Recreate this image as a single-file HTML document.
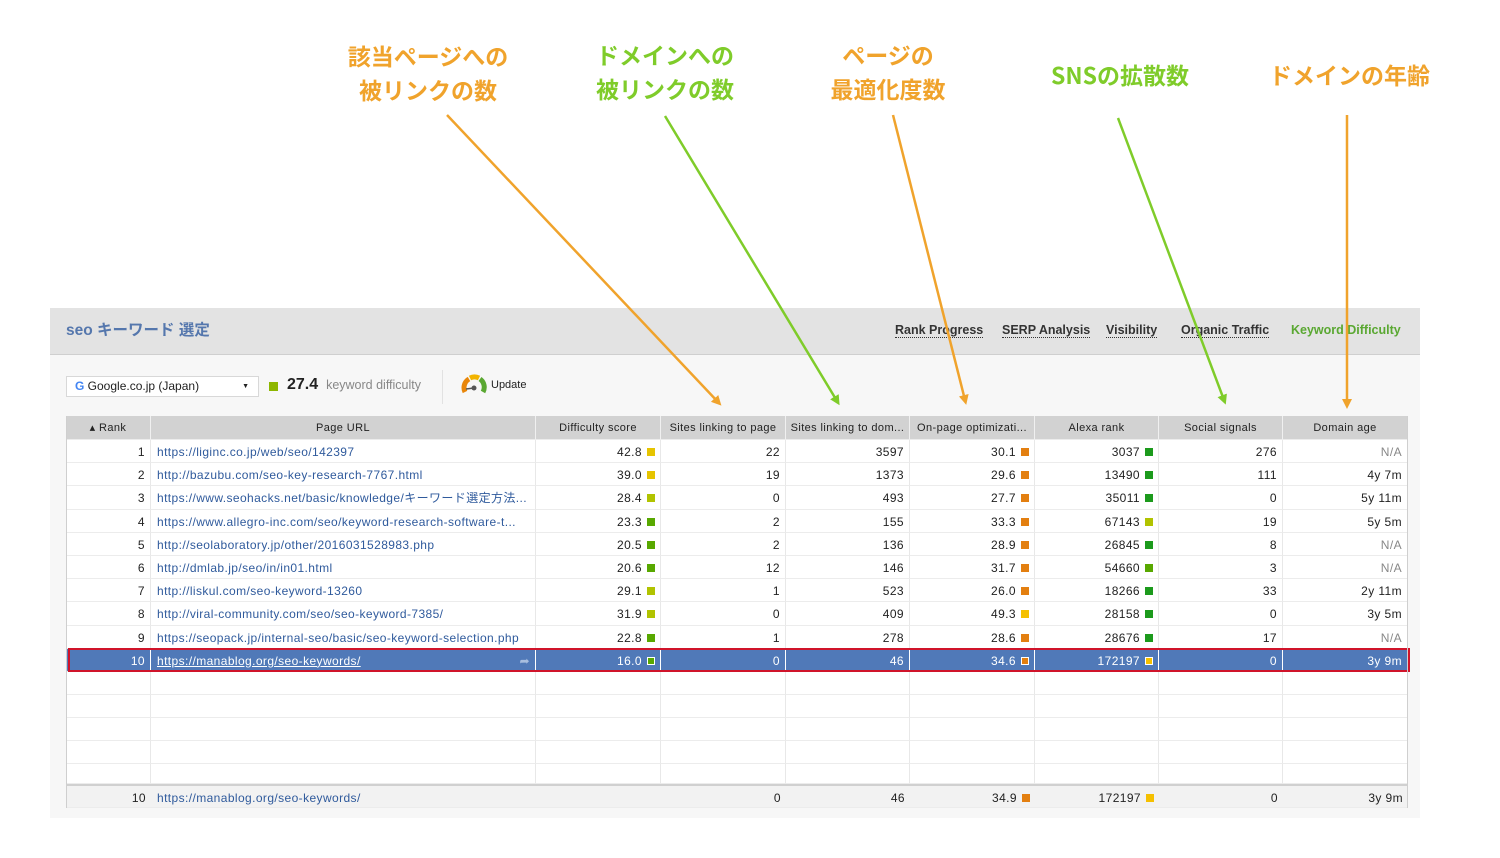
<!DOCTYPE html>
<html><head><meta charset="utf-8"><style>
*{margin:0;padding:0;box-sizing:border-box}
body{width:1500px;height:858px;background:#fff;position:relative;overflow:hidden;font-family:"Liberation Sans","Noto Sans CJK JP",sans-serif}
.lbl{position:absolute;font-weight:bold;font-size:23px;text-align:center;line-height:34px;font-family:"Noto Sans CJK JP","Liberation Sans",sans-serif;white-space:nowrap}
.o{color:#f0a32c}.g{color:#7fcc2a}
#panel{position:absolute;left:50px;top:308px;width:1370px;height:510px;background:#f7f7f7}
#hdr{position:absolute;left:0;top:0;width:1370px;height:47px;background:#e3e3e3;border-bottom:1px solid #cfcfcf}
#title{position:absolute;left:16px;top:10px;font-size:15.5px;color:#5577ad;font-weight:bold;font-family:"Liberation Sans","Noto Sans CJK JP",sans-serif}
.tab{position:absolute;top:15px;font-size:12.5px;font-weight:bold;color:#333;border-bottom:1px dotted #333;line-height:14px}
.row{position:absolute;left:66px;width:1342px;display:grid;grid-template-columns:85px 385px 125px 125px 124px 125px 124px 124px 125px;font-size:12px;color:#222;background:#fff}
.row div{border-right:1px solid #e8e8e8;border-bottom:1px solid #ececec;text-align:right;padding-right:5px;padding-top:1px;white-space:nowrap;overflow:hidden;line-height:22px;letter-spacing:.4px}
.row div.u{text-align:left;padding-left:6px;color:#2f5a9c}
.sq{display:inline-block;width:8px;height:8px;margin-left:5px;vertical-align:0px}
.y{background:#e6c400}.yg{background:#b1c300}.gr{background:#58a800}.dg{background:#1c9a1c}.or{background:#e37f10}.ye{background:#f5c000}
.head div{background:#d2d2d2;text-align:center;padding:0;padding-top:1px;border-right:1px solid #f0f0f0;color:#222;font-size:11px}
.sel{background:#5079b8}
.sel div{color:#fff;border-right:1px solid #fff}
.sel div.u{color:#fff;text-decoration:underline}
.na{color:#888}
</style></head><body>

<div class="lbl o" style="left:338px;top:38px;width:180px">該当ページへの<br>被リンクの数</div>
<div class="lbl g" style="left:580px;top:37px;width:170px">ドメインへの<br>被リンクの数</div>
<div class="lbl o" style="left:818px;top:37px;width:140px">ページの<br>最適化度数</div>
<div class="lbl g" style="left:1040px;top:57px;width:160px">SNSの拡散数</div>
<div class="lbl o" style="left:1262px;top:57px;width:175px">ドメインの年齢</div>

<div id="panel">
 <div id="hdr">
  <div id="title">seo キーワード 選定</div>
  <div class="tab" style="left:845px">Rank Progress</div>
  <div class="tab" style="left:952px">SERP Analysis</div>
  <div class="tab" style="left:1056px">Visibility</div>
  <div class="tab" style="left:1131px">Organic Traffic</div>
  <div class="tab" style="left:1241px;color:#5aa832;border:none">Keyword Difficulty</div>
 </div>
 <div style="position:absolute;left:16px;top:68px;width:193px;height:21px;background:#fff;border:1px solid #d8d8d8;font-size:12px;line-height:19px;padding-left:8px;color:#222"><b style="color:#4285f4">G</b> Google.co.jp (Japan)<span style="position:absolute;right:9px;font-size:7px">▼</span></div>
 <div style="position:absolute;left:219px;top:74px;width:9px;height:9px;background:#8db600"></div>
 <div style="position:absolute;left:237px;top:68px;font-size:16px;font-weight:bold;color:#222">27.4 <span style="font-size:12.5px;font-weight:normal;color:#888">&nbsp;keyword difficulty</span></div>
 <div style="position:absolute;left:392px;top:62px;width:1px;height:34px;background:#e2e2e2"></div>
 <svg style="position:absolute;left:411px;top:66px" width="26" height="24" viewBox="0 0 26 24"><path d="M4 18 A10 10 0 0 1 8 5" stroke="#e8860a" stroke-width="5" fill="none"/><path d="M9 4 A10 10 0 0 1 18 4" stroke="#f2b400" stroke-width="5" fill="none"/><path d="M19 5 A10 10 0 0 1 22 18" stroke="#5aa832" stroke-width="5" fill="none"/><circle cx="13" cy="14" r="2.5" fill="#555"/><path d="M5 15 L13 14" stroke="#555" stroke-width="1.5"/></svg>
 <div style="position:absolute;left:441px;top:71px;font-size:11px;color:#222">Update</div>
</div>

<div class="row head" style="top:416px;height:24px"><div>▴ Rank</div><div>Page URL</div><div>Difficulty score</div><div>Sites linking to page</div><div>Sites linking to dom...</div><div>On-page optimizati...</div><div>Alexa rank</div><div>Social signals</div><div>Domain age</div></div>

<div class="row" style="top:440px;height:23.2px"><div>1</div><div class="u">https://liginc.co.jp/web/seo/142397</div><div>42.8<i class="sq y"></i></div><div>22</div><div>3597</div><div>30.1<i class="sq or"></i></div><div>3037<i class="sq dg"></i></div><div>276</div><div class="na">N/A</div></div>
<div class="row" style="top:463.2px;height:23.2px"><div>2</div><div class="u">http://bazubu.com/seo-key-research-7767.html</div><div>39.0<i class="sq y"></i></div><div>19</div><div>1373</div><div>29.6<i class="sq or"></i></div><div>13490<i class="sq dg"></i></div><div>111</div><div>4y 7m</div></div>
<div class="row" style="top:486.4px;height:23.2px"><div>3</div><div class="u">https://www.seohacks.net/basic/knowledge/キーワード選定方法...</div><div>28.4<i class="sq yg"></i></div><div>0</div><div>493</div><div>27.7<i class="sq or"></i></div><div>35011<i class="sq dg"></i></div><div>0</div><div>5y 11m</div></div>
<div class="row" style="top:509.6px;height:23.2px"><div>4</div><div class="u">https://www.allegro-inc.com/seo/keyword-research-software-t...</div><div>23.3<i class="sq gr"></i></div><div>2</div><div>155</div><div>33.3<i class="sq or"></i></div><div>67143<i class="sq yg"></i></div><div>19</div><div>5y 5m</div></div>
<div class="row" style="top:532.8px;height:23.2px"><div>5</div><div class="u">http://seolaboratory.jp/other/2016031528983.php</div><div>20.5<i class="sq gr"></i></div><div>2</div><div>136</div><div>28.9<i class="sq or"></i></div><div>26845<i class="sq dg"></i></div><div>8</div><div class="na">N/A</div></div>
<div class="row" style="top:556px;height:23.2px"><div>6</div><div class="u">http://dmlab.jp/seo/in/in01.html</div><div>20.6<i class="sq gr"></i></div><div>12</div><div>146</div><div>31.7<i class="sq or"></i></div><div>54660<i class="sq gr"></i></div><div>3</div><div class="na">N/A</div></div>
<div class="row" style="top:579.2px;height:23.2px"><div>7</div><div class="u">http://liskul.com/seo-keyword-13260</div><div>29.1<i class="sq yg"></i></div><div>1</div><div>523</div><div>26.0<i class="sq or"></i></div><div>18266<i class="sq dg"></i></div><div>33</div><div>2y 11m</div></div>
<div class="row" style="top:602.4px;height:23.2px"><div>8</div><div class="u">http://viral-community.com/seo/seo-keyword-7385/</div><div>31.9<i class="sq yg"></i></div><div>0</div><div>409</div><div>49.3<i class="sq ye"></i></div><div>28158<i class="sq dg"></i></div><div>0</div><div>3y 5m</div></div>
<div class="row" style="top:625.6px;height:23.2px"><div>9</div><div class="u">https://seopack.jp/internal-seo/basic/seo-keyword-selection.php</div><div>22.8<i class="sq gr"></i></div><div>1</div><div>278</div><div>28.6<i class="sq or"></i></div><div>28676<i class="sq dg"></i></div><div>17</div><div class="na">N/A</div></div>
<div class="row sel" style="top:648.8px;height:23.2px"><div>10</div><div class="u">https://manablog.org/seo-keywords/<span style="float:right;text-decoration:none;color:#a8bedf">➦</span></div><div>16.0<i class="sq gr" style="border:1px solid #fff"></i></div><div>0</div><div>46</div><div>34.6<i class="sq or" style="border:1px solid #fff"></i></div><div>172197<i class="sq ye" style="border:1px solid #fff"></i></div><div>0</div><div>3y 9m</div></div>
<div style="position:absolute;left:68px;top:648px;width:1342px;height:24px;border:2px solid #d0142a"></div>

<div class="row" style="top:672px;height:23px"><div></div><div></div><div></div><div></div><div></div><div></div><div></div><div></div><div></div></div>
<div class="row" style="top:695px;height:23px"><div></div><div></div><div></div><div></div><div></div><div></div><div></div><div></div><div></div></div>
<div class="row" style="top:718px;height:23px"><div></div><div></div><div></div><div></div><div></div><div></div><div></div><div></div><div></div></div>
<div class="row" style="top:741px;height:23px"><div></div><div></div><div></div><div></div><div></div><div></div><div></div><div></div><div></div></div>
<div class="row" style="top:764px;height:20px"><div></div><div></div><div></div><div></div><div></div><div></div><div></div><div></div><div></div></div>
<div class="row" style="top:784px;height:24px;background:#f2f2f2;border-top:2px solid #d0d0d0"><div style="border-right:none">10</div><div class="u" style="border-right:none">https://manablog.org/seo-keywords/</div><div style="border-right:none"></div><div style="border-right:none">0</div><div style="border-right:none">46</div><div style="border-right:none">34.9<i class="sq or"></i></div><div style="border-right:none">172197<i class="sq ye"></i></div><div style="border-right:none">0</div><div style="border-right:none">3y 9m</div></div>
<div style="position:absolute;left:66px;top:416px;width:1px;height:392px;background:#cfcfcf"></div>
<div style="position:absolute;left:1407px;top:416px;width:1px;height:392px;background:#cfcfcf"></div>

<svg style="position:absolute;left:0;top:0" width="1500" height="858">
<defs>
<marker id="ao" markerWidth="4" markerHeight="4" refX="2" refY="2" orient="auto"><path d="M0,0 L4,2 L0,4 z" fill="#f0a32c"/></marker>
<marker id="ag" markerWidth="4" markerHeight="4" refX="2" refY="2" orient="auto"><path d="M0,0 L4,2 L0,4 z" fill="#7fcc2a"/></marker>
</defs>
<g stroke-width="2.5" fill="none">
<line x1="447" y1="115" x2="718" y2="402" stroke="#f0a32c" marker-end="url(#ao)"/>
<line x1="665" y1="116" x2="837" y2="401" stroke="#7fcc2a" marker-end="url(#ag)"/>
<line x1="893" y1="115" x2="965" y2="400" stroke="#f0a32c" marker-end="url(#ao)"/>
<line x1="1118" y1="118" x2="1224" y2="400" stroke="#7fcc2a" marker-end="url(#ag)"/>
<line x1="1347" y1="115" x2="1347" y2="404" stroke="#f0a32c" marker-end="url(#ao)"/>
</g></svg>
</body></html>
